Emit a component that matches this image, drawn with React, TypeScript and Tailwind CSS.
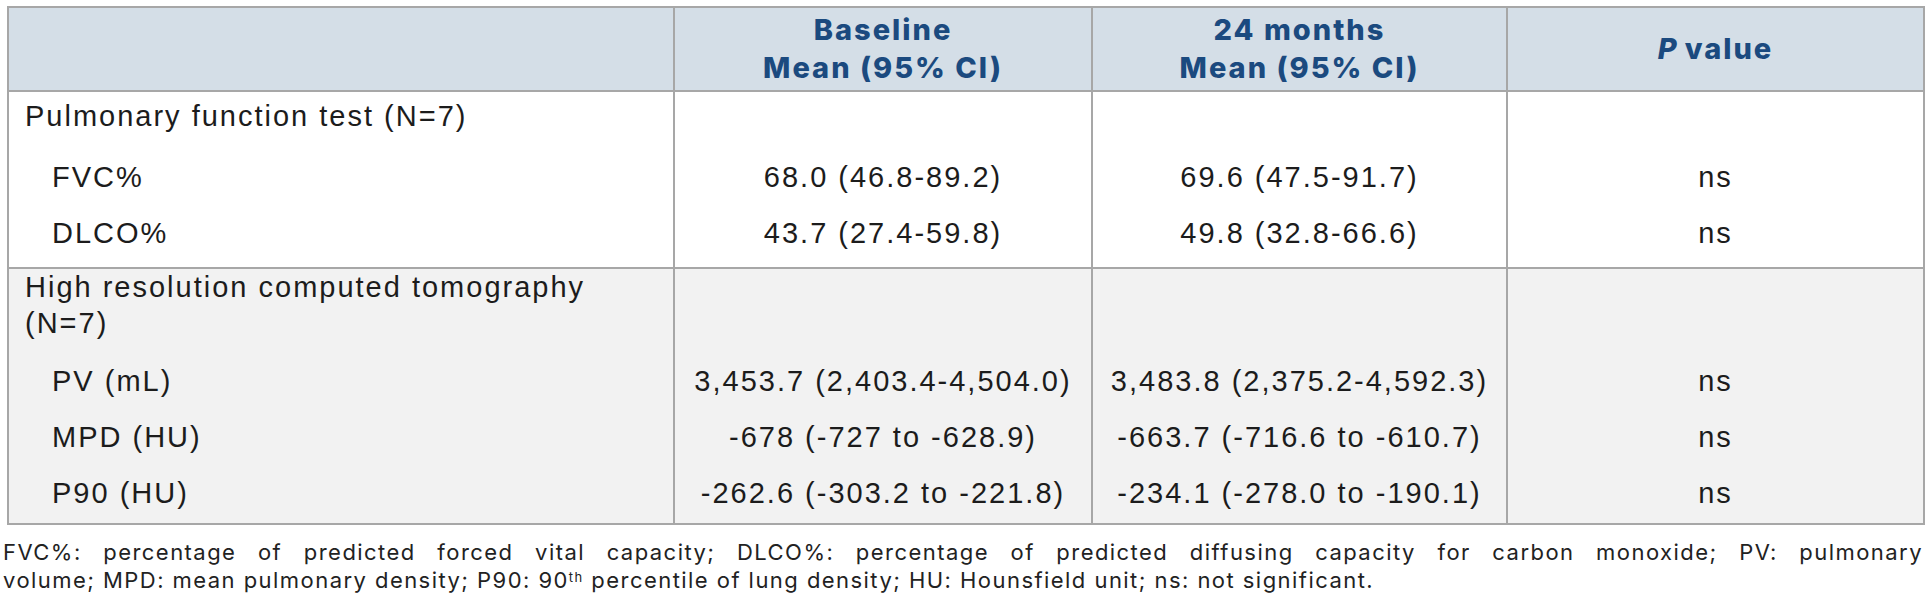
import React from "react";

const COLS = "grid grid-cols-[664px_418px_415px_417px]";
const BODY = "font-['Liberation_Sans',Arial,sans-serif] text-[29px] tracking-[2px] text-[#1c1c1c]";
const HEAD = "font-['Inter',sans-serif] font-extrabold text-[29px] tracking-[2px] text-[#1b4a7f] leading-[38.5px] text-center";
const VLINE = "border-l-2 border-[#a7a7a7]";

type RowProps = {
  label: React.ReactNode;
  indent?: boolean;
  values?: [string, string, string];
  h: string;
  labelCls?: string;
};

function Row({ label, indent, values, h, labelCls }: RowProps) {
  return (
    <div className={`${COLS} ${h}`}>
      <div className={`${indent ? "pl-[43px]" : "pl-[16px]"} ${labelCls ?? "leading-[56px]"} whitespace-nowrap`}>{label}</div>
      <div className={`${VLINE} text-center leading-[56px] whitespace-nowrap`}>{values ? values[0] : ""}</div>
      <div className={`${VLINE} text-center leading-[56px] whitespace-nowrap`}>{values ? values[1] : ""}</div>
      <div className={`${VLINE} text-center leading-[56px] whitespace-nowrap`}>{values ? values[2] : ""}</div>
    </div>
  );
}

export default function App() {
  return (
    <div className="w-[1932px] h-[610px] bg-white overflow-hidden pt-[6px]">
      <div className={`ml-[7px] w-[1918px] border-2 border-[#a7a7a7] ${BODY}`}>
        {/* Header */}
        <div className={`${COLS} h-[84px] bg-[#d4dee7] border-b-2 border-[#a7a7a7]`}>
          <div />
          <div className={`${VLINE} flex items-center justify-center`}>
            <div className={HEAD}>
              Baseline
              <br />
              Mean (95% CI)
            </div>
          </div>
          <div className={`${VLINE} flex items-center justify-center`}>
            <div className={HEAD}>
              24 months
              <br />
              Mean (95% CI)
            </div>
          </div>
          <div className={`${VLINE} flex items-center justify-center`}>
            <div className={HEAD}>
              <span className="italic mr-[6px]">P</span>value
            </div>
          </div>
        </div>

        {/* Group 1 */}
        <div className="bg-white border-b-2 border-[#a7a7a7]">
          <Row label="Pulmonary function test (N=7)" h="h-[57px]" labelCls="pt-[4px] leading-[41px]" />
          <Row label="FVC%" indent values={["68.0 (46.8-89.2)", "69.6 (47.5-91.7)", "ns"]} h="h-[56px]" />
          <Row label="DLCO%" indent values={["43.7 (27.4-59.8)", "49.8 (32.8-66.6)", "ns"]} h="h-[62px]" />
        </div>

        {/* Group 2 */}
        <div className="bg-[#f2f2f2]">
          <Row
            label={
              <>
                High resolution computed tomography
                <br />
                (N=7)
              </>
            }
            h="h-[84px]"
            labelCls="leading-[36px]"
          />
          <Row label="PV (mL)" indent values={["3,453.7 (2,403.4-4,504.0)", "3,483.8 (2,375.2-4,592.3)", "ns"]} h="h-[56px]" />
          <Row label="MPD (HU)" indent values={["-678 (-727 to -628.9)", "-663.7 (-716.6 to -610.7)", "ns"]} h="h-[56px]" />
          <Row label="P90 (HU)" indent values={["-262.6 (-303.2 to -221.8)", "-234.1 (-278.0 to -190.1)", "ns"]} h="h-[58px]" />
        </div>
      </div>

      {/* Footnote */}
      <div className="mt-[13px] ml-[3px] w-[1920px] font-['Inter',sans-serif] text-[22px] leading-[28px] tracking-[1.45px] text-[#222]">
        <div className="text-justify [text-align-last:justify] whitespace-nowrap">
          FVC%: percentage of predicted forced vital capacity; DLCO%: percentage of predicted diffusing capacity for carbon monoxide; PV: pulmonary
        </div>
        <div className="whitespace-nowrap">
          volume; MPD: mean pulmonary density; P90: 90<sup className="text-[13px]">th</sup> percentile of lung density; HU: Hounsfield unit; ns: not significant.
        </div>
      </div>
    </div>
  );
}
